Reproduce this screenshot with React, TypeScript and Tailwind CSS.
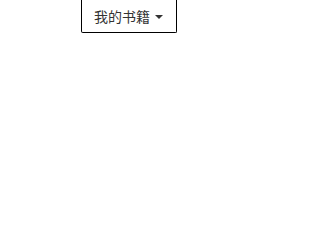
import * as React from "react";

export default function App() {
  return (
    <div className="h-[201px] w-full bg-white pl-[81px]" style={{ fontFamily: '"Liberation Sans", "Noto Sans CJK SC", sans-serif' }}>
      <button
        type="button"
        className="flex h-[33px] w-[96px] items-center border border-t-0 border-black rounded-b-[2px] pl-[12px] pr-[12px] text-[14px] leading-[20px] text-[#333] bg-white"
      >
        <span className="pt-[1px]">我的书籍</span>
        <span className="ml-[5px] mt-[1px] h-0 w-0 border-l-[4px] border-r-[4px] border-t-[4px] border-l-transparent border-r-transparent border-t-[#333]" />
      </button>
    </div>
  );
}
